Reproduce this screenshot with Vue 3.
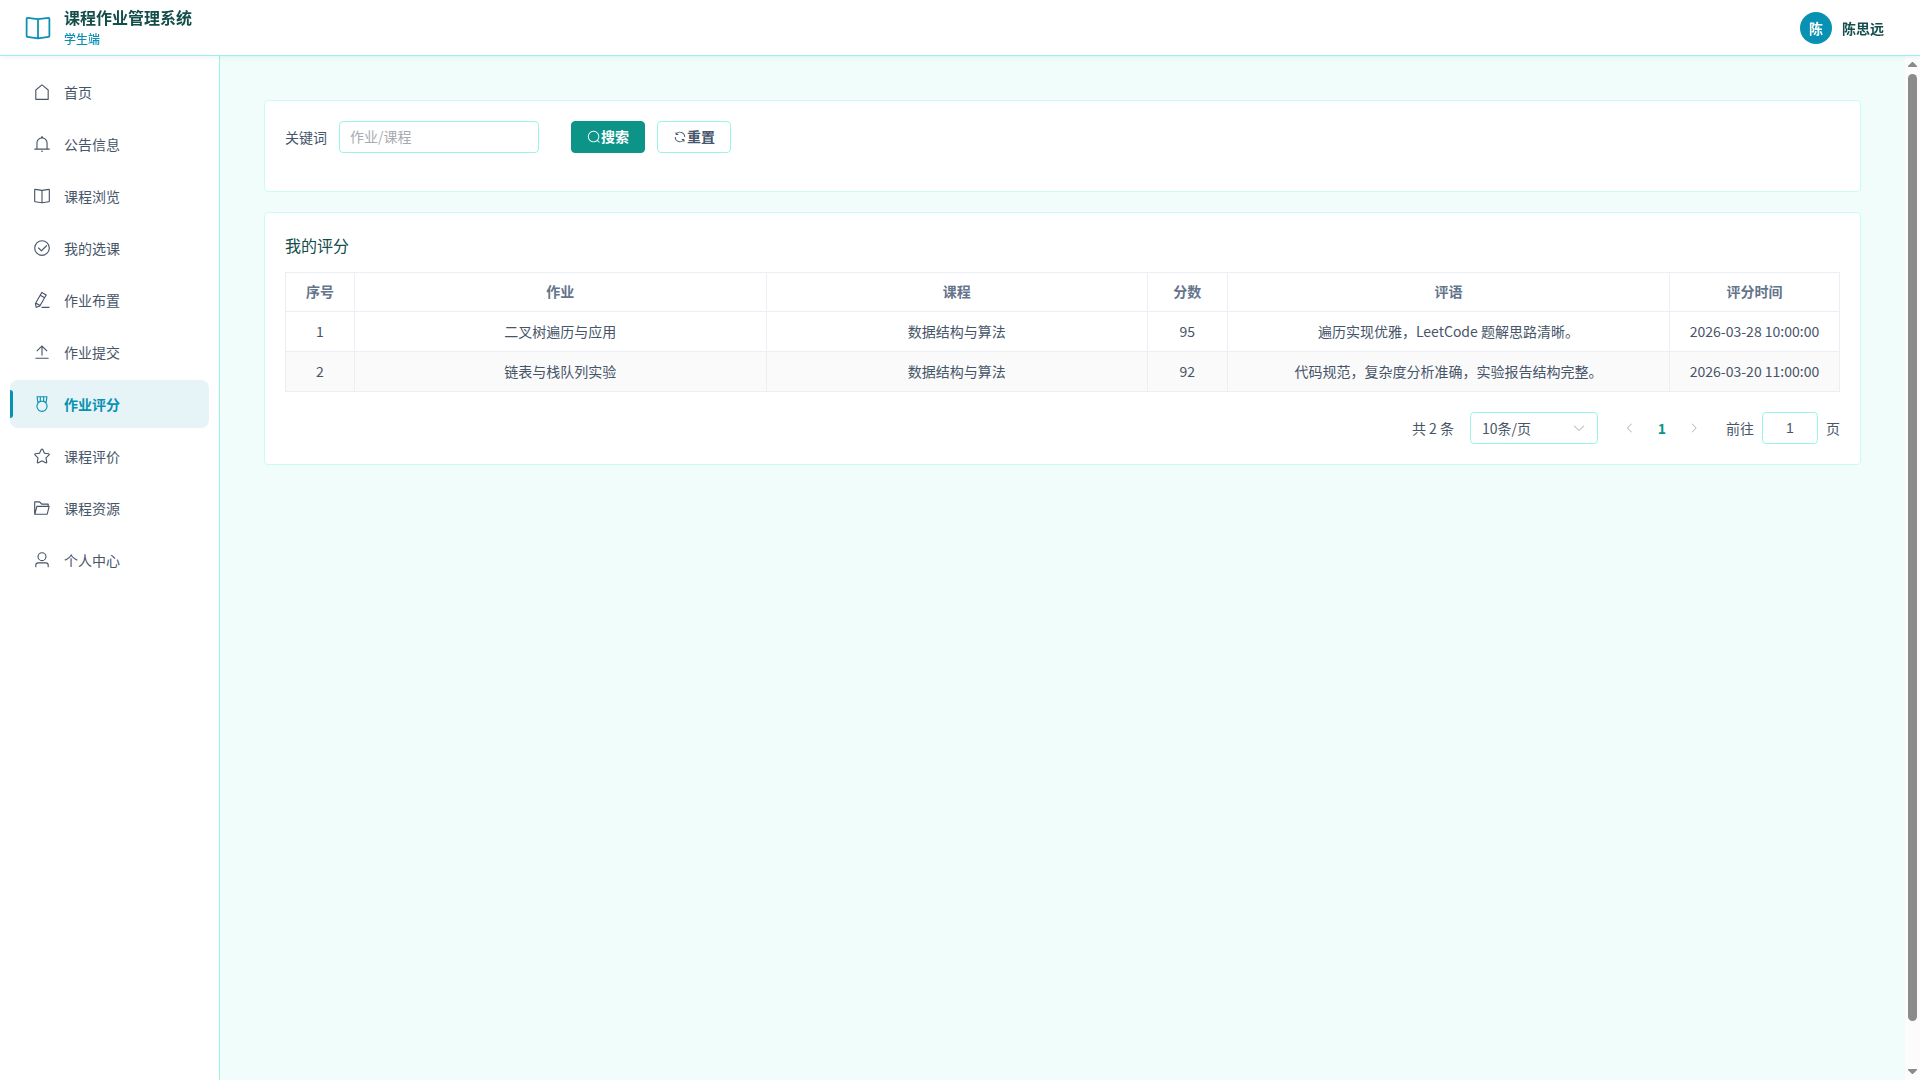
<template>
  <div class="layout">
    <header class="header">
      <div class="brand">
        <svg class="brand-icon" viewBox="0 0 1024 1024" aria-hidden="true"><path :d="icons.reading" /></svg>
        <div class="brand-text">
          <h1 class="brand-title">课程作业管理系统</h1>
          <span class="brand-sub">学生端</span>
        </div>
      </div>
      <div class="user">
        <span class="avatar">陈</span>
        <span class="user-name">陈思远</span>
      </div>
    </header>

    <div class="body">
      <nav class="sidebar">
        <a
          v-for="item in menus"
          :key="item.path"
          :href="'#/' + item.path"
          class="menu-item"
          :class="{ active: item.path === activeMenu }"
          @click.prevent="activeMenu = item.path"
        >
          <svg class="menu-icon" viewBox="0 0 1024 1024" aria-hidden="true"><path :d="icons[item.icon]" /></svg>
          <span>{{ item.label }}</span>
        </a>
      </nav>

      <main ref="mainEl" class="main" @scroll="updateThumb">
        <div class="page">
          <section class="card">
            <form class="search-form" @submit.prevent="search">
              <label class="form-label" for="keyword">关键词</label>
              <input id="keyword" v-model="keyword" class="input keyword" type="text" placeholder="作业/课程" />
              <button class="btn primary" type="submit">
                <svg viewBox="0 0 1024 1024" aria-hidden="true"><path :d="icons.search" /></svg>
                <span>搜索</span>
              </button>
              <button class="btn" type="button" @click="reset">
                <svg viewBox="0 0 1024 1024" aria-hidden="true"><path :d="icons.refresh" /></svg>
                <span>重置</span>
              </button>
            </form>
          </section>

          <section class="card">
            <h2 class="card-title">我的评分</h2>
            <table class="table">
              <colgroup>
                <col class="col-index" />
                <col class="col-homework" />
                <col class="col-course" />
                <col class="col-score" />
                <col class="col-comment" />
                <col class="col-time" />
              </colgroup>
              <thead>
                <tr>
                  <th>序号</th>
                  <th>作业</th>
                  <th>课程</th>
                  <th>分数</th>
                  <th>评语</th>
                  <th>评分时间</th>
                </tr>
              </thead>
              <tbody>
                <tr v-for="(row, index) in list" :key="row.homework">
                  <td>{{ index + 1 }}</td>
                  <td>{{ row.homework }}</td>
                  <td>{{ row.course }}</td>
                  <td>{{ row.score }}</td>
                  <td>{{ row.comment }}</td>
                  <td>{{ row.time }}</td>
                </tr>
              </tbody>
            </table>

            <div class="pagination">
              <span class="total">共 {{ rows.length }} 条</span>
              <div class="select-wrap">
                <select v-model="pageSize" class="input size-select" aria-label="每页条数">
                  <option v-for="n in [10, 20, 50, 100]" :key="n" :value="n">{{ n }}条/页</option>
                </select>
                <svg class="select-arrow" viewBox="0 0 1024 1024" aria-hidden="true"><path :d="icons.arrowDown" /></svg>
              </div>
              <div class="pager">
                <button class="pager-btn" type="button" disabled aria-label="上一页">
                  <svg viewBox="0 0 1024 1024" aria-hidden="true"><path :d="icons.arrowLeft" /></svg>
                </button>
                <button class="pager-btn current" type="button">1</button>
                <button class="pager-btn" type="button" disabled aria-label="下一页">
                  <svg viewBox="0 0 1024 1024" aria-hidden="true"><path :d="icons.arrowRight" /></svg>
                </button>
              </div>
              <label class="jump">
                <span>前往</span>
                <input v-model="jumpPage" class="input jump-input" type="text" />
                <span>页</span>
              </label>
            </div>
          </section>
        </div>
      </main>

      <div class="scrollbar" aria-hidden="true">
        <svg class="scroll-arrow" viewBox="0 0 9 5"><path d="M4 0h1l4 4v1H0V4z" /></svg>
        <div class="scroll-track">
          <div class="scroll-thumb" :style="{ height: thumb.height + '%', marginTop: thumb.top + 'px' }"></div>
        </div>
        <svg class="scroll-arrow" viewBox="0 0 9 5"><path d="M0 0h9v1L5 5H4L0 1z" /></svg>
      </div>
    </div>
  </div>
</template>

<script setup>
import { ref, computed, onMounted, onUnmounted } from 'vue'

const icons = {
  house: 'M192 413.952V896h640V413.952L512 147.328zM139.52 374.4l352-293.312a32 32 0 0 1 40.96 0l352 293.312A32 32 0 0 1 896 398.976V928a32 32 0 0 1-32 32H160a32 32 0 0 1-32-32V398.976a32 32 0 0 1 11.52-24.576',
  bell: 'M512 64a64 64 0 0 1 64 64v64H448v-64a64 64 0 0 1 64-64M256 768h512V448a256 256 0 1 0-512 0zm256-640a320 320 0 0 1 320 320v384H192V448a320 320 0 0 1 320-320M96 768h832q32 0 32 32t-32 32H96q-32 0-32-32t32-32m352 128h128a64 64 0 0 1-128 0',
  reading: 'm512 863.36 384-54.848v-638.72L525.568 222.72a96 96 0 0 1-27.136 0L128 169.792v638.72zM137.024 106.432l370.432 52.928a32 32 0 0 0 9.088 0l370.432-52.928A64 64 0 0 1 960 169.792v638.72a64 64 0 0 1-54.976 63.36l-388.48 55.488a32 32 0 0 1-9.088 0l-388.48-55.488A64 64 0 0 1 64 808.512v-638.72a64 64 0 0 1 73.024-63.36M480 192h64v704h-64z',
  circleCheck: 'M512 896a384 384 0 1 0 0-768 384 384 0 0 0 0 768m0 64a448 448 0 1 1 0-896 448 448 0 0 1 0 896M745.344 361.344a32 32 0 0 1 45.312 45.312l-288 288a32 32 0 0 1-45.312 0l-160-160a32 32 0 1 1 45.312-45.312L480 626.752z',
  editPen: 'm199.04 672.64 193.984 112 224-387.968-193.92-112-224 388.032zm-23.872 60.16 32.896 148.288 144.896-45.696zM455.04 229.248l193.92 112 56.704-98.112-193.984-112zM104.32 708.8l384-665.024 304.768 175.936L409.152 884.8h.064l-248.448 78.336zm384 254.272v-64h448v64z',
  upload: 'M160 832h704a32 32 0 1 1 0 64H160a32 32 0 1 1 0-64m384-578.304V704h-64V247.296L237.248 490.048 192 444.8 508.8 128l316.8 316.8-45.312 45.248z',
  medal: 'M512 896a256 256 0 1 0 0-512 256 256 0 0 0 0 512m0 64a320 320 0 1 1 0-640 320 320 0 0 1 0 640M576 128H448v200a286.7 286.7 0 0 1 64-8c19.52 0 40.832 2.688 64 8zm64 0v219.648c24.448 9.088 50.56 20.416 78.4 33.92L757.44 128zm-256 0H266.624l39.04 253.568c27.84-13.504 53.888-24.832 78.336-33.92zM229.312 64h565.376a32 32 0 0 1 31.616 36.864L768 480c-113.792-64-199.104-96-256-96s-142.208 32-256 96l-58.304-379.136A32 32 0 0 1 229.312 64',
  star: 'm512 747.84 228.16 119.936a6.4 6.4 0 0 0 9.28-6.72l-43.52-254.08 184.512-179.904a6.4 6.4 0 0 0-3.52-10.88l-255.104-37.12L517.76 147.904a6.4 6.4 0 0 0-11.52 0L392.192 379.072l-255.104 37.12a6.4 6.4 0 0 0-3.52 10.88L318.08 606.976l-43.584 254.08a6.4 6.4 0 0 0 9.28 6.72zM313.6 924.48a70.4 70.4 0 0 1-102.144-74.24l37.888-220.928L88.96 472.96A70.4 70.4 0 0 1 128 352.896l221.76-32.256 99.2-200.96a70.4 70.4 0 0 1 126.208 0l99.2 200.96 221.824 32.256a70.4 70.4 0 0 1 39.04 120.064L774.72 629.376l37.888 220.928a70.4 70.4 0 0 1-102.144 74.24L512 820.096l-198.4 104.32z',
  folderOpened: 'M878.08 448H241.92l-96 384h636.16zM832 384v-64H485.76L357.504 192H128v448l57.92-231.744A32 32 0 0 1 216.96 384zm-24.96 512H96a32 32 0 0 1-32-32V160a32 32 0 0 1 32-32h287.872l128.384 128H864a32 32 0 0 1 32 32v96h23.04a32 32 0 0 1 31.04 39.744l-112 448A32 32 0 0 1 807.04 896',
  user: 'M512 512a192 192 0 1 0 0-384 192 192 0 0 0 0 384m0 64a256 256 0 1 1 0-512 256 256 0 0 1 0 512m320 320v-96a96 96 0 0 0-96-96H288a96 96 0 0 0-96 96v96a32 32 0 1 1-64 0v-96a160 160 0 0 1 160-160h448a160 160 0 0 1 160 160v96a32 32 0 1 1-64 0',
  search: 'm795.904 750.72 124.992 124.928a32 32 0 0 1-45.248 45.248L750.656 795.904a416 416 0 1 1 45.248-45.248zM480 832a352 352 0 1 0 0-704 352 352 0 0 0 0 704',
  refresh: 'M771.776 794.88A384 384 0 0 1 128 512h64a320 320 0 0 0 555.712 216.448H654.72a32 32 0 1 1 0-64h149.056a32 32 0 0 1 32 32v148.928a32 32 0 1 1-64 0v-50.56zM276.288 295.616h92.992a32 32 0 0 1 0 64H220.16a32 32 0 0 1-32-32V178.56a32 32 0 0 1 64 0v50.56A384 384 0 0 1 896.128 512h-64a320 320 0 0 0-555.776-216.384z',
  arrowLeft: 'M609.408 149.376 277.76 489.6a32 32 0 0 0 0 44.672l331.648 340.352a29.12 29.12 0 0 0 41.728 0 30.59 30.59 0 0 0 0-42.752L339.264 511.936l311.872-319.872a30.59 30.59 0 0 0 0-42.688 29.12 29.12 0 0 0-41.728 0',
  arrowRight: 'M340.864 149.312a30.59 30.59 0 0 0 0 42.752L652.736 512 340.864 831.872a30.59 30.59 0 0 0 0 42.752 29.12 29.12 0 0 0 41.728 0L714.24 534.336a32 32 0 0 0 0-44.672L382.592 149.376a29.12 29.12 0 0 0-41.728 0z',
  arrowDown: 'M831.872 340.864 512 652.672 192.128 340.864a30.59 30.59 0 0 0-42.752 0 29.12 29.12 0 0 0 0 41.6L489.664 714.24a32 32 0 0 0 44.672 0l340.288-331.712a29.12 29.12 0 0 0 0-41.728 30.59 30.59 0 0 0-42.752 0z'
}

const menus = [
  { path: 'home', label: '首页', icon: 'house' },
  { path: 'notice', label: '公告信息', icon: 'bell' },
  { path: 'course', label: '课程浏览', icon: 'reading' },
  { path: 'selection', label: '我的选课', icon: 'circleCheck' },
  { path: 'homework', label: '作业布置', icon: 'editPen' },
  { path: 'submit', label: '作业提交', icon: 'upload' },
  { path: 'score', label: '作业评分', icon: 'medal' },
  { path: 'evaluate', label: '课程评价', icon: 'star' },
  { path: 'resource', label: '课程资源', icon: 'folderOpened' },
  { path: 'profile', label: '个人中心', icon: 'user' }
]
const activeMenu = ref('score')

const rows = [
  { homework: '二叉树遍历与应用', course: '数据结构与算法', score: 95, comment: '遍历实现优雅，LeetCode 题解思路清晰。', time: '2026-03-28 10:00:00' },
  { homework: '链表与栈队列实验', course: '数据结构与算法', score: 92, comment: '代码规范，复杂度分析准确，实验报告结构完整。', time: '2026-03-20 11:00:00' }
]

const keyword = ref('')
const query = ref('')
const pageSize = ref(10)
const jumpPage = ref('1')

const list = computed(() => rows.filter(r => (r.homework + r.course).includes(query.value)))

function search() {
  query.value = keyword.value.trim()
}

function reset() {
  keyword.value = ''
  query.value = ''
}

// scrollbar of the content area, the native one is hidden
const mainEl = ref(null)
const thumb = ref({ height: 100, top: 0 })

function updateThumb() {
  const { clientHeight, scrollHeight, scrollTop } = mainEl.value
  thumb.value = {
    height: (clientHeight / scrollHeight) * 100,
    top: (scrollTop / scrollHeight) * (clientHeight - 36)
  }
}

onMounted(() => {
  updateThumb()
  window.addEventListener('resize', updateThumb)
})
onUnmounted(() => window.removeEventListener('resize', updateThumb))
</script>

<style>
body { margin: 0; background: #f0fdfa; }
</style>

<style scoped>
* { box-sizing: border-box; }
svg { fill: currentColor; flex: none; display: block; }
h1, h2 { margin: 0; }
button, input, select { font: inherit; }

.layout { display: flex; flex-direction: column; height: 100vh; font-family: "Noto Sans CJK SC", sans-serif; font-size: 14px; color: #475569; }

/* header */
.header { display: flex; align-items: center; justify-content: space-between; flex: none; height: 56px; padding: 0 36px 0 24px; background: #fff; border-bottom: 1px solid #99f6e4; box-shadow: 0 1px 4px rgba(13, 148, 136, 0.1); position: relative; z-index: 1; }
.brand { display: flex; align-items: center; gap: 12px; color: #0891b2; }
.brand-icon { width: 28px; height: 28px; }
.brand-text { display: flex; flex-direction: column; gap: 2px; padding-bottom: 2px; }
.brand-title { font-size: 16px; line-height: 22px; font-weight: 700; color: #134e4a; }
.brand-sub { font-size: 12px; line-height: 18px; font-weight: 500; }
.user { display: flex; align-items: center; gap: 10px; font-weight: 600; color: #134e4a; }
.avatar { width: 32px; height: 32px; line-height: 32px; border-radius: 50%; background: #0891b2; color: #fff; text-align: center; }

.body { display: flex; flex: 1; min-height: 0; }

/* sidebar */
.sidebar { display: flex; flex-direction: column; gap: 4px; flex: none; width: 220px; padding: 12px 10px; background: #fff; border-right: 1px solid #99f6e4; overflow-y: auto; }
.menu-item { display: flex; align-items: center; gap: 13px; flex: none; height: 48px; padding-left: 23px; border-radius: 8px; color: #475569; text-decoration: none; position: relative; }
.menu-item span { line-height: 20px; }
.menu-icon { width: 18px; height: 18px; }
.menu-item.active { background: #e6f4f7; color: #0891b2; font-weight: 600; }
.menu-item.active::before { content: ''; position: absolute; left: 0; top: 10px; bottom: 10px; width: 3px; border-radius: 0 3px 3px 0; background: #0891b2; }

/* content */
.main { flex: 1; min-width: 0; overflow-y: auto; scrollbar-width: none; background: #f0fdfa; }
.page { display: flex; flex-direction: column; gap: 20px; min-height: calc(100% + 44px); padding: 44px; }
.card { padding: 20px; background: #fff; border: 1px solid #ccfbf1; border-radius: 4px; }
.card-title { margin-bottom: 14px; font-size: 16px; line-height: 25px; font-weight: 400; color: #134e4a; }

.input { height: 32px; padding: 0 11px; border: 1px solid #99f6e4; border-radius: 4px; background: #fff; color: #475569; outline: none; }
.input::placeholder { color: #a8abb2; opacity: 1; }
.input:focus { border-color: #0d9488; }

.search-form { display: flex; align-items: center; padding-bottom: 18px; }
.form-label { padding-right: 12px; }
.keyword { width: 200px; margin-right: 32px; padding: 0 10px 2px; }
.btn { display: flex; align-items: center; height: 32px; padding: 0 15px; border: 1px solid #99f6e4; border-radius: 4px; background: #fff; color: #475569; font-weight: 600; cursor: pointer; }
.btn svg { width: 14px; height: 14px; }
.btn span { padding-bottom: 2px; }
.btn + .btn { margin-left: 12px; }
.btn.primary { border-color: #0d9488; background: #0d9488; color: #fff; }

.table { width: 100%; table-layout: fixed; border-collapse: separate; border-spacing: 0; border-top: 1px solid #ebeef5; border-left: 1px solid #ebeef5; line-height: 23px; text-align: center; }
.table th, .table td { padding: 8px 12px; border-right: 1px solid #ebeef5; border-bottom: 1px solid #ebeef5; }
.table th { padding: 7px 12px 9px; line-height: 22px; font-weight: 600; color: #64748b; }
.table tbody tr:nth-child(even) { background: #fafafa; }
.col-index { width: 69px; }
.col-homework { width: 27%; }
.col-course { width: 25%; }
.col-score { width: 80px; }
.col-comment { width: 29%; }
.col-time { width: 170px; }

.pagination { display: flex; align-items: center; justify-content: flex-end; gap: 16px; margin-top: 20px; }
.select-wrap { position: relative; }
.size-select { display: block; width: 128px; appearance: none; cursor: pointer; }
.select-arrow { position: absolute; right: 12px; top: 9px; width: 14px; height: 14px; color: #a8abb2; pointer-events: none; }
.pager { display: flex; }
.pager-btn { display: flex; align-items: center; justify-content: center; width: 32px; height: 32px; padding: 0; border: 0; background: none; color: #475569; }
.pager-btn:disabled { color: #a8abb2; }
.pager-btn svg { width: 12px; height: 12px; }
.pager-btn.current { color: #0d9488; font-weight: 700; }
.jump { display: flex; align-items: center; gap: 8px; }
.jump-input { width: 56px; text-align: center; font-family: "Liberation Sans", Arial, sans-serif; }

.scrollbar { display: flex; flex-direction: column; align-items: center; gap: 7px; flex: none; width: 15px; padding: 6px 0; background: #fcfcfc; color: #8b8b8b; }
.scroll-arrow { width: 9px; height: 5px; }
.scroll-track { flex: 1; min-height: 0; }
.scroll-thumb { width: 9px; border-radius: 5px; background: #8b8b8b; }
</style>
